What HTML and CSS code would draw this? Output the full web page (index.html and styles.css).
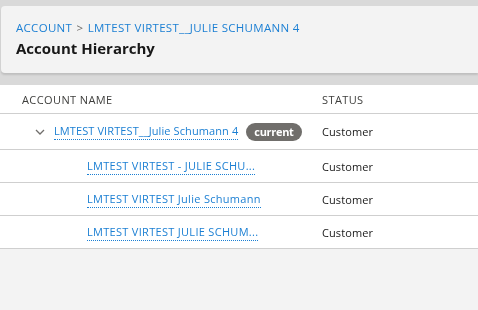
FILE: index.html
```html
<!DOCTYPE html>
<html lang="en">
<head>
    <meta charset="UTF-8">
    <title>Account Hierarchy</title>
    <link rel="stylesheet" href="styles.css">
</head>
<body>
    <div class="page-header">
        <nav class="breadcrumb">
            <a href="#">Account</a>
            <span class="sep">&gt;</span>
            <a href="#">LMTEST VIRTEST__Julie Schumann 4</a>
        </nav>
        <h1>Account Hierarchy</h1>
    </div>

    <div class="hierarchy">
        <div class="row head">
            <div class="col-name">Account Name</div>
            <div class="col-status">Status</div>
        </div>
        <div class="row top">
            <div class="col-name">
                <span class="chevron">
                    <svg width="10" height="10" viewBox="0 0 10 10"><path d="M1 3 L5 7 L9 3" fill="none" stroke="#706e6b" stroke-width="1.3"/></svg>
                </span>
                <a href="#" class="acct">LMTEST VIRTEST__Julie Schumann 4</a>
                <span class="badge">current</span>
            </div>
            <div class="col-status">Customer</div>
        </div>
        <div class="row child">
            <div class="col-name"><a href="#" class="acct">LMTEST VIRTEST - JULIE SCHU...</a></div>
            <div class="col-status">Customer</div>
        </div>
        <div class="row child">
            <div class="col-name"><a href="#" class="acct">LMTEST VIRTEST Julie Schumann</a></div>
            <div class="col-status">Customer</div>
        </div>
        <div class="row child">
            <div class="col-name"><a href="#" class="acct">LMTEST VIRTEST JULIE SCHUM...</a></div>
            <div class="col-status">Customer</div>
        </div>
    </div>
</body>
</html>
```

FILE: styles.css
```css
:root {
    --link: #1b7fd3;
    --text: #181818;
    --muted: #3e3e3c;
    --line: #cfcfcf;
}

* {
    margin: 0;
    padding: 0;
    box-sizing: border-box;
}

body {
    font-family: 'Open Sans', 'Noto Sans', sans-serif;
    background: #f3f3f3;
    color: var(--text);
    padding-top: 6px;
    width: 478px;
    height: 310px;
    overflow: hidden;
}

body::before {
    content: '';
    position: fixed;
    top: 0;
    left: 0;
    right: 0;
    height: 85px;
    background: #d9d9d9;
    z-index: -1;
}

.page-header {
    margin-left: 1px;
    height: 67px;
    background: #f3f3f3;
    border-radius: 4px 0 0 4px;
    box-shadow: 0 2px 2px rgba(0,0,0,0.12);
    padding: 15px 0 0 15px;
}

.breadcrumb {
    font-size: 11.5px;
    text-transform: uppercase;
    letter-spacing: 0.3px;
    color: #706e6b;
    line-height: 14px;
}

.breadcrumb a {
    color: var(--link);
    text-decoration: none;
}

.breadcrumb .sep {
    margin: 0 1px;
    color: #706e6b;
}

.page-header h1 {
    font-size: 15px;
    font-weight: 700;
    line-height: 20px;
    margin-top: 3px;
}

.hierarchy {
    margin-top: 12px;
    background: #fff;
}

.row {
    display: flex;
    align-items: center;
    border-bottom: 1px solid var(--line);
    font-size: 11px;
    letter-spacing: 0.1px;
}

.row.head {
    height: 29px;
    text-transform: uppercase;
    color: var(--muted);
    letter-spacing: 0.4px;
}

.row.top {
    height: 36px;
}

.row.child {
    height: 33px;
}

.row.child .acct {
    letter-spacing: 0.3px;
}

.col-name {
    width: 322px;
    padding-left: 22px;
    display: flex;
    align-items: center;
}

.row.child .col-name {
    padding-left: 87px;
}

.col-status {
    flex: 1;
}

.chevron {
    display: flex;
    flex-shrink: 0;
    width: 32px;
    padding-left: 13px;
}

.acct {
    color: var(--link);
    text-decoration: none;
    border-bottom: 1px dotted var(--link);
    line-height: 16px;
    white-space: nowrap;
}

.badge {
    margin-left: 8px;
    background: #706e6b;
    color: #fff;
    font-weight: 700;
    font-size: 11px;
    letter-spacing: -0.3px;
    line-height: 18px;
    padding: 0 8px;
    border-radius: 9px;
}
```
